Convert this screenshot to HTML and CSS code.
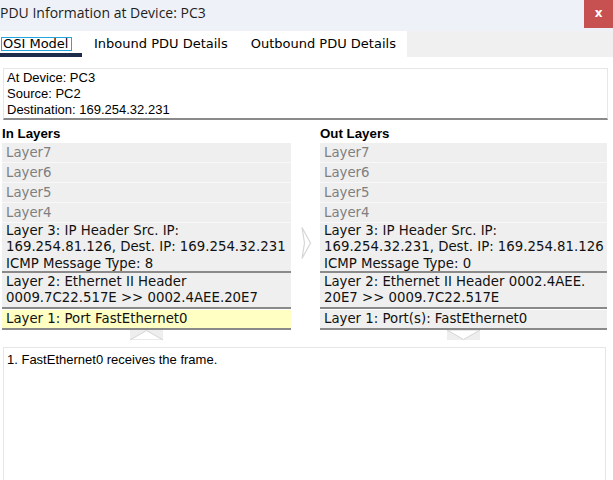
FILE: index.html
```html
<!DOCTYPE html>
<html>
<head>
<meta charset="utf-8">
<link rel="stylesheet" href="styles.css">
</head>
<body>
<div class="window">
  <div class="titlebar">
    <span class="title">PDU Information at Device: PC3</span>
    <span class="close">x</span>
  </div>
  <div class="tabbar">
    <div class="tabs">
      <div class="tab active"><span class="focus">OSI Model</span></div>
      <div class="tab">Inbound PDU Details</div>
      <div class="tab">Outbound PDU Details</div>
    </div>
  </div>
  <div class="content">
    <div class="info">At Device: PC3<br>Source: PC2<br>Destination: 169.254.32.231</div>
    <div class="layers">
      <div class="col">
        <div class="col-title">In Layers</div>
        <div class="stack">
          <div class="layer off">Layer7</div>
          <div class="layer off">Layer6</div>
          <div class="layer off">Layer5</div>
          <div class="layer off">Layer4</div>
          <div class="layer l3">Layer 3: IP Header Src. IP:<br>169.254.81.126, Dest. IP: 169.254.32.231<br>ICMP Message Type: 8</div>
          <div class="layer l2">Layer 2: Ethernet II Header<br>0009.7C22.517E &gt;&gt; 0002.4AEE.20E7</div>
          <div class="layer l1 cur">Layer 1: Port FastEthernet0</div>
        </div>
        <svg class="updown" width="33" height="10" viewBox="0 0 33 10">
          <rect x="0" y="0" width="33" height="10" fill="#eeeeee"/>
          <polygon points="0,10 16.5,0.5 33,10" fill="#ffffff" stroke="#d4d4d4" stroke-width="1"/>
        </svg>
      </div>
      <div class="mid">
        <svg class="next" width="11" height="32" viewBox="0 0 11 32">
          <path d="M1 0.5 L9.5 16 L1 31.5 L3.5 16 Z" fill="#ffffff" stroke="#d6d6d6" stroke-width="1.2" stroke-linejoin="miter"/>
        </svg>
      </div>
      <div class="col">
        <div class="col-title">Out Layers</div>
        <div class="stack">
          <div class="layer off">Layer7</div>
          <div class="layer off">Layer6</div>
          <div class="layer off">Layer5</div>
          <div class="layer off">Layer4</div>
          <div class="layer l3">Layer 3: IP Header Src. IP:<br>169.254.32.231, Dest. IP: 169.254.81.126<br>ICMP Message Type: 0</div>
          <div class="layer l2">Layer 2: Ethernet II Header 0002.4AEE.<br>20E7 &gt;&gt; 0009.7C22.517E</div>
          <div class="layer l1">Layer 1: Port(s): FastEthernet0</div>
        </div>
        <svg class="updown" width="33" height="10" viewBox="0 0 33 10">
          <rect x="0" y="0" width="33" height="10" fill="#eeeeee"/>
          <polygon points="0,0 16.5,9.5 33,0" fill="#ffffff" stroke="#d4d4d4" stroke-width="1"/>
        </svg>
      </div>
    </div>
    <div class="log">1. FastEthernet0 receives the frame.</div>
  </div>
</div>
</body>
</html>
```
FILE: styles.css
```css
html, body {
  margin: 0;
  padding: 0;
  background: #ffffff;
}
.window {
  width: 613px;
  height: 480px;
  overflow: hidden;
  background: #ffffff;
}
.titlebar {
  height: 31px;
  background: #eef2f8;
  display: flex;
  justify-content: space-between;
  align-items: flex-start;
}
.title {
  font-family: "Open Sans", "Noto Sans", sans-serif;
  font-size: 14px;
  line-height: 26px;
  color: #1e1e1e;
}
.close {
  width: 29px;
  height: 28px;
  background: #c75050;
  color: #ffffff;
  font-family: "DejaVu Sans", sans-serif;
  font-size: 12px;
  font-weight: bold;
  line-height: 27px;
  text-align: center;
}
.tabbar {
  height: 26px;
  background: #f0f0f0;
  display: flex;
}
.tabs {
  width: 407px;
  background: #ffffff;
  display: flex;
  font-family: "DejaVu Sans", sans-serif;
  font-size: 13px;
  color: #000000;
}
.tab {
  height: 26px;
  box-sizing: border-box;
  padding: 0 11px 0 12px;
  line-height: 26px;
  white-space: nowrap;
}
.tab.active {
  width: 82px;
  flex: none;
  padding: 3px 0 0 1px;
  border-bottom: 4px solid #1b2d4b;
  line-height: 20px;
}
.focus {
  display: inline-block;
  border: 1px solid #24a5de;
  line-height: 12px;
  height: 12px;
  padding: 0 3px 0 1px;
}
.content {
  padding: 0 5px 0 2px;
}
.info {
  margin-top: 11px;
  margin-left: 1px;
  border: 1px solid #e6e6e6;
  border-bottom: 2px solid #8a8a8a;
  padding: 1px 3px 0 3px;
  height: 48px;
  font-family: "Liberation Sans", Arial, sans-serif;
  font-size: 13px;
  line-height: 16px;
  color: #000000;
}
.layers {
  display: grid;
  grid-template-columns: 289px 29px 287px;
}
.col {
  display: flex;
  flex-direction: column;
}
.col-title {
  margin-top: 5px;
  height: 18px;
  line-height: 18px;
  font-family: "Liberation Sans", Arial, sans-serif;
  font-weight: bold;
  font-size: 13.3px;
  color: #000000;
}
.stack {
  display: flex;
  flex-direction: column;
  font-family: "DejaVu Sans", sans-serif;
  font-size: 13.3px;
  white-space: nowrap;
}
.layer {
  background: #efefef;
  padding-left: 4px;
  color: #111111;
}
.layer.off {
  height: 19px;
  line-height: 19px;
  border-bottom: 1px solid #f8f8f8;
  color: #7f7f7f;
}
.layer.l3 {
  line-height: 16.3px;
  height: 48px;
  padding-top: 0;
  border-bottom: 2px solid #8a8a8a;
}
.layer.l2 {
  line-height: 16px;
  padding-top: 1px;
  padding-bottom: 1px;
  height: 32px;
  border-bottom: 2px solid #8a8a8a;
}
.layer.l1 {
  margin-top: 1px;
  height: 18px;
  line-height: 18px;
  border-bottom: 2px solid #8a8a8a;
}
.layer.cur {
  background: #ffffc4;
}
.updown {
  display: block;
  align-self: center;
}
.mid {
  padding-top: 107px;
  padding-left: 10px;
}
.next {
  display: block;
}
.log {
  margin-top: 7px;
  margin-left: 1px;
  margin-right: 2px;
  height: 140px;
  border: 1px solid #e6e6e6;
  padding: 4px 3px;
  font-family: "Liberation Sans", Arial, sans-serif;
  font-size: 13px;
  line-height: 16px;
  color: #000000;
}
```
